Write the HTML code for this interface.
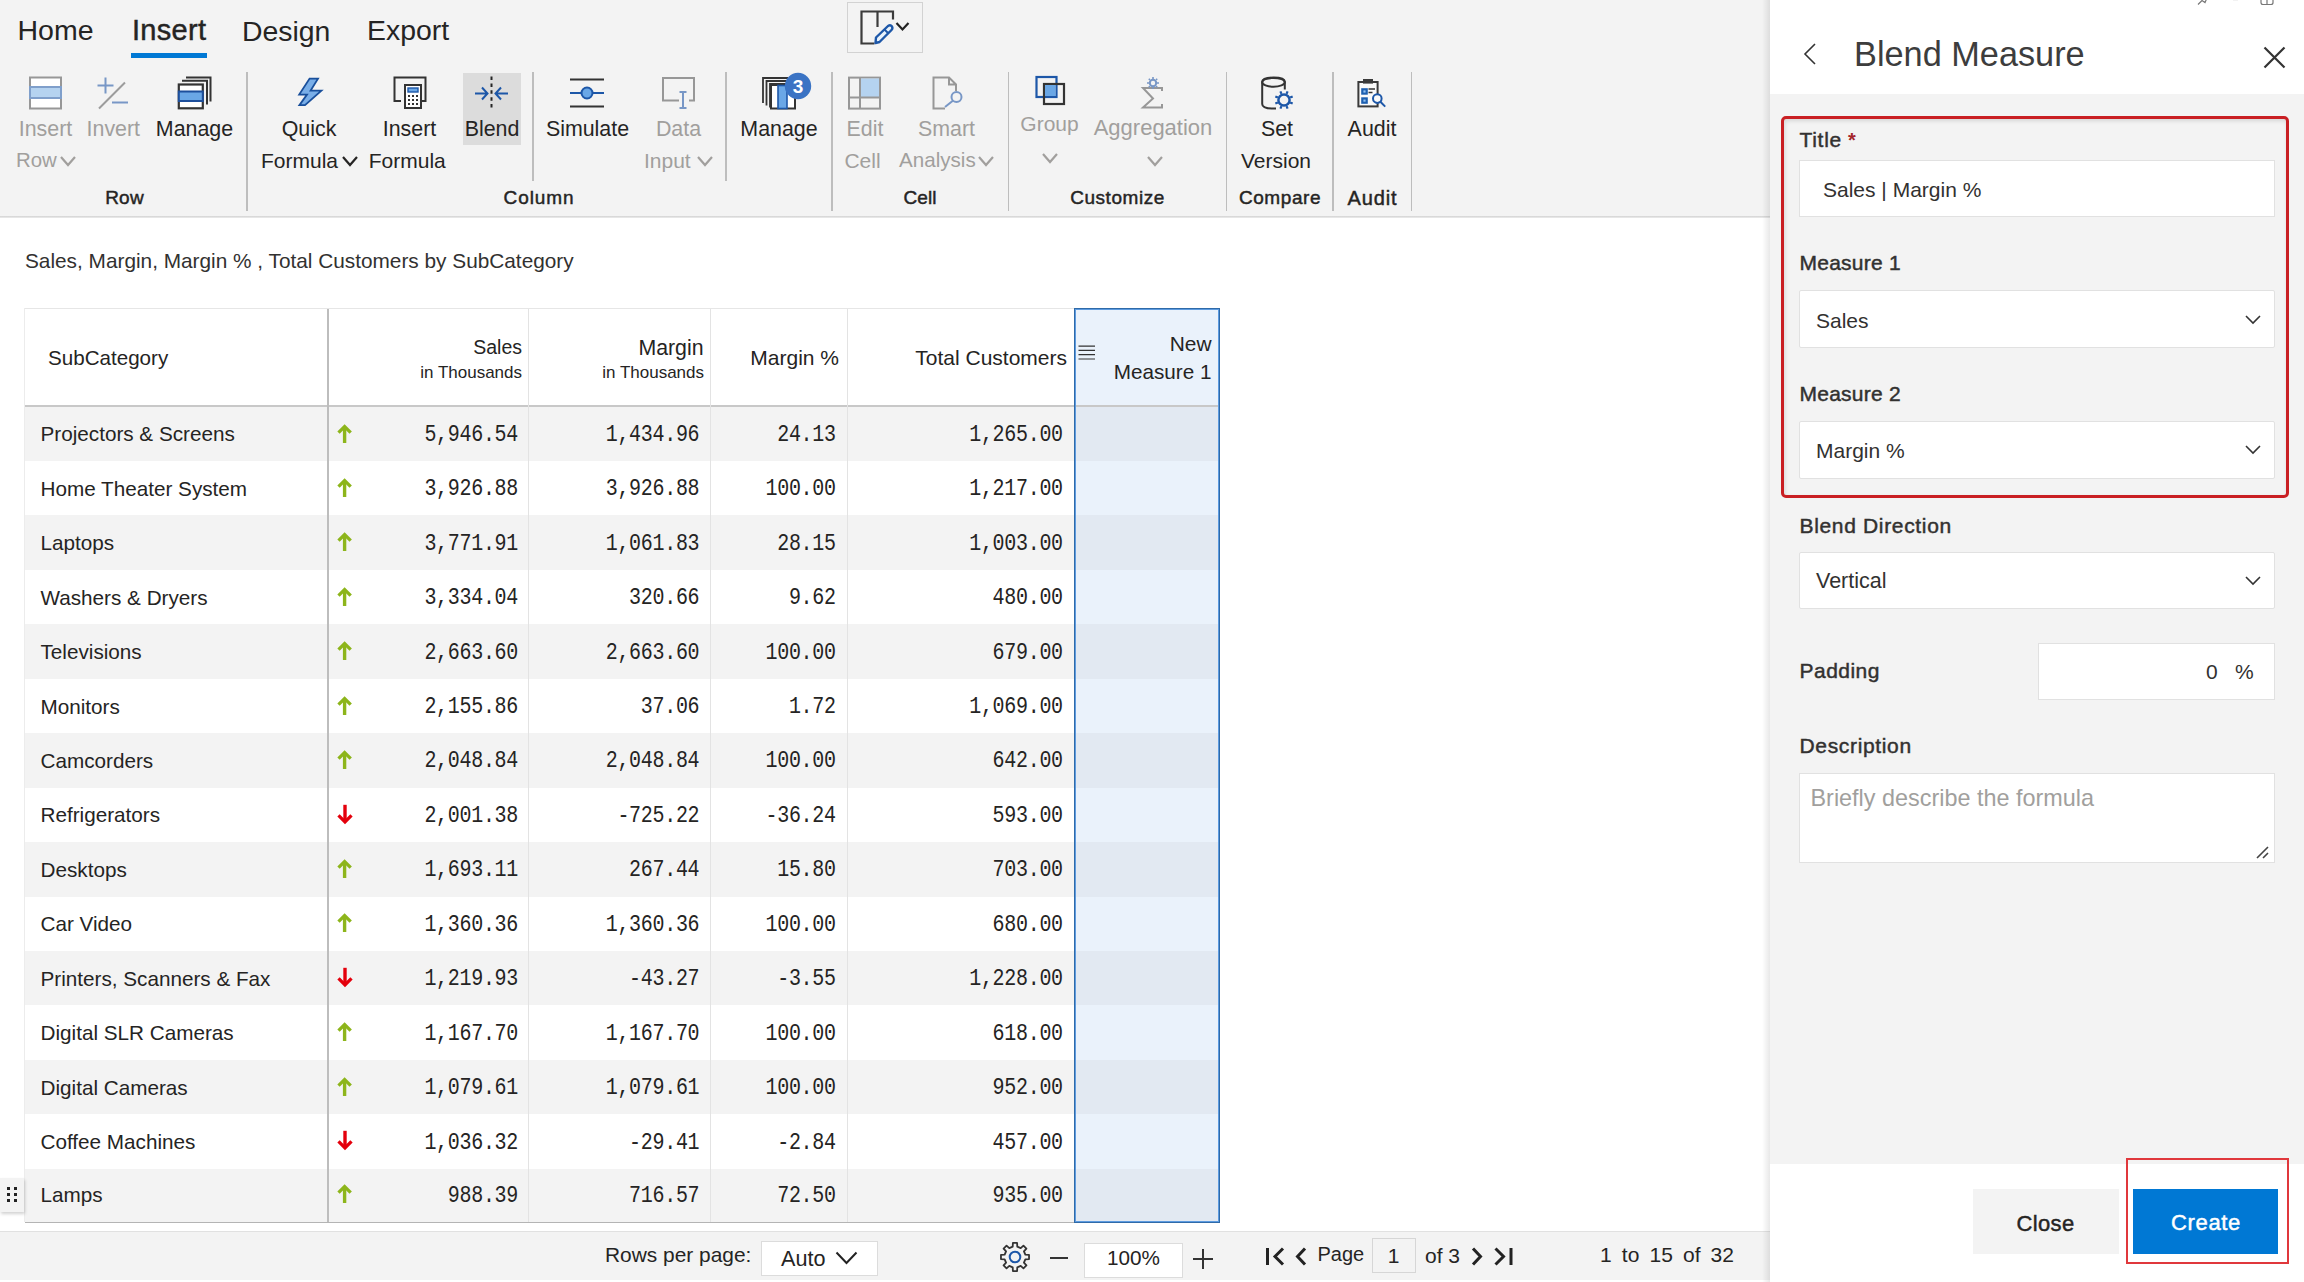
<!DOCTYPE html>
<html><head><meta charset="utf-8"><title>Blend Measure</title>
<style>
html,body{margin:0;padding:0;}
body{width:2304px;height:1282px;position:relative;overflow:hidden;background:#fff;font-family:"Liberation Sans",sans-serif;}
.a{position:absolute;}
.t{position:absolute;white-space:pre;line-height:1;}
</style></head><body>
<div class="a" style="left:0px;top:0px;width:1770px;height:217px;background:#f3f3f3"></div>
<div class="a" style="left:0px;top:216px;width:1770px;height:3px;background:linear-gradient(#d2d2d2,#e6e6e6 50%,#fff)"></div>
<div class="a" style="left:0px;top:218px;width:1770px;height:1013px;background:#fff"></div>
<div class="a" style="left:0px;top:1231px;width:1770px;height:1px;background:#e1e1e1"></div>
<div class="a" style="left:0px;top:1232px;width:1770px;height:48px;background:#f3f3f3"></div>
<div class="a" style="left:0px;top:1280px;width:1770px;height:2px;background:#fff"></div>
<div class="t" style="left:17.5px;top:15.86px;font-family:'Liberation Sans', sans-serif;font-size:28.5px;font-weight:400;color:#252423;">Home</div>
<div class="t" style="left:132px;top:16.14px;font-family:'Liberation Sans', sans-serif;font-size:29px;font-weight:400;color:#252423;-webkit-text-stroke:0.45px #252423;letter-spacing:0.3px">Insert</div>
<div class="a" style="left:131px;top:53px;width:76px;height:5px;background:#0078d4"></div>
<div class="t" style="left:242px;top:16.64px;font-family:'Liberation Sans', sans-serif;font-size:28.4px;font-weight:400;color:#252423;">Design</div>
<div class="t" style="left:367px;top:15.64px;font-family:'Liberation Sans', sans-serif;font-size:28.4px;font-weight:400;color:#252423;">Export</div>
<div class="a" style="left:847px;top:2px;width:76px;height:50.5px;border:1px solid #d2d2d2;box-sizing:border-box;background:#f3f3f3"></div>
<svg class="a" style="left:856px;top:7px;" width="60" height="40" viewBox="0 0 60 40"><path d="M18.5 36.5 H5.5 V4.5 H37 V12.5" fill="none" stroke="#3b3b3b" stroke-width="2.2"/><path d="M21.5 4.5 V20" stroke="#3b3b3b" stroke-width="2.2"/><path d="M19.5 36 L20 30.5 L32 19 Q34.5 17.5 36 19.5 Q37 21.5 35.5 23 L23.5 35 Z" fill="#e8f2fb" stroke="#1d57a8" stroke-width="2.4" stroke-linejoin="round"/><path d="M28.5 22.5 L32 26" stroke="#1d57a8" stroke-width="2"/><path d="M40.5 16 L46.5 22.5 L52.5 16" fill="none" stroke="#222" stroke-width="2.2"/></svg>
<div class="a" style="left:246px;top:72px;width:1.6px;height:139px;background:#bdbdbd"></div>
<div class="a" style="left:532px;top:72px;width:1.6px;height:109px;background:#bdbdbd"></div>
<div class="a" style="left:725px;top:72px;width:1.6px;height:109px;background:#bdbdbd"></div>
<div class="a" style="left:831px;top:72px;width:1.6px;height:139px;background:#bdbdbd"></div>
<div class="a" style="left:1007.5px;top:72px;width:1.6px;height:139px;background:#bdbdbd"></div>
<div class="a" style="left:1225.5px;top:72px;width:1.6px;height:139px;background:#bdbdbd"></div>
<div class="a" style="left:1332px;top:72px;width:1.6px;height:139px;background:#bdbdbd"></div>
<div class="a" style="left:1410.5px;top:72px;width:1.6px;height:139px;background:#bdbdbd"></div>
<svg class="a" style="left:28px;top:76px;" width="36" height="34" viewBox="0 0 36 34"><rect x="2" y="1.5" width="31" height="31" fill="#fff" stroke="#979797" stroke-width="2"/><rect x="2" y="11" width="31" height="11" fill="#b5d3f0" stroke="#7f9fcb" stroke-width="2"/></svg>
<div class="t" style="left:-354.5px;width:800px;text-align:center;top:118.52px;font-family:'Liberation Sans', sans-serif;font-size:21.4px;font-weight:400;color:#a19f9d;">Insert</div>
<div class="t" style="left:16px;top:150.36px;font-family:'Liberation Sans', sans-serif;font-size:20.4px;font-weight:400;color:#a19f9d;">Row</div>
<svg class="a" style="left:58.5px;top:155.0px;" width="18" height="12" viewBox="0 0 18 12"><path d="M2 2 L9.0 10 L16 2" fill="none" stroke="#a19f9d" stroke-width="2.2"/></svg>
<svg class="a" style="left:95px;top:75px;" width="36" height="36" viewBox="0 0 36 36"><path d="M2.5 10.5 H18.5 M10.5 2.5 V18.5" stroke="#7897c6" stroke-width="2"/><path d="M4 33.5 L30 7.5" stroke="#9c9c9c" stroke-width="2"/><path d="M17 27.5 H33" stroke="#7897c6" stroke-width="2"/></svg>
<div class="t" style="left:-286.7px;width:800px;text-align:center;top:118.52px;font-family:'Liberation Sans', sans-serif;font-size:21.4px;font-weight:400;color:#a19f9d;">Invert</div>
<svg class="a" style="left:176px;top:74px;" width="38" height="38" viewBox="0 0 38 38"><path d="M10 3.5 H34.5 V27.5" fill="none" stroke="#333" stroke-width="2"/><path d="M6 6.8 H31 V30.5" fill="none" stroke="#333" stroke-width="2"/><rect x="2.8" y="10.5" width="24" height="23.8" fill="#fff" stroke="#333" stroke-width="2.2"/><rect x="2.8" y="17.5" width="24" height="9.5" fill="#6aa7e6" stroke="#1d4f9c" stroke-width="2"/></svg>
<div class="t" style="left:-205.5px;width:800px;text-align:center;top:118.52px;font-family:'Liberation Sans', sans-serif;font-size:21.4px;font-weight:400;color:#252423;">Manage</div>
<div class="t" style="left:-275.5px;width:800px;text-align:center;top:187.54px;font-family:'Liberation Sans', sans-serif;font-size:19px;font-weight:400;color:#252423;-webkit-text-stroke:0.45px #252423;letter-spacing:0.23px">Row</div>
<svg class="a" style="left:296px;top:75px;" width="30" height="34" viewBox="0 0 30 34"><path d="M13.6 3.6 H22 L14.6 15.6 H25.4 L9 30.2 H3.4 L11 19.6 H3.2 Z" fill="#79aee8" stroke="#194f9b" stroke-width="1.8" stroke-linejoin="miter"/></svg>
<div class="t" style="left:-91px;width:800px;text-align:center;top:118.52px;font-family:'Liberation Sans', sans-serif;font-size:21.4px;font-weight:400;color:#252423;">Quick</div>
<div class="t" style="left:261px;top:149.86px;font-family:'Liberation Sans', sans-serif;font-size:21px;font-weight:400;color:#252423;">Formula</div>
<svg class="a" style="left:341.0px;top:155.0px;" width="18" height="12" viewBox="0 0 18 12"><path d="M2 2 L9.0 10 L16 2" fill="none" stroke="#252423" stroke-width="2.2"/></svg>
<svg class="a" style="left:391px;top:75px;" width="38" height="36" viewBox="0 0 38 36"><path d="M10 26 H3.5 V2.5 H34.5 V26 H31" fill="none" stroke="#333" stroke-width="2"/><rect x="14" y="10" width="16" height="23" fill="#fff" stroke="#333" stroke-width="2"/><rect x="17" y="13" width="10" height="4" fill="#6aa7e6" stroke="#1d57a8" stroke-width="1.4"/><g fill="#333"><rect x="17" y="20" width="2" height="2"/><rect x="21" y="20" width="2" height="2"/><rect x="25" y="20" width="2" height="2"/><rect x="17" y="24" width="2" height="2"/><rect x="21" y="24" width="2" height="2"/><rect x="25" y="24" width="2" height="2"/><rect x="17" y="28" width="2" height="2"/><rect x="21" y="28" width="2" height="2"/><rect x="25" y="28" width="2" height="2"/></g></svg>
<div class="t" style="left:9.5px;width:800px;text-align:center;top:118.52px;font-family:'Liberation Sans', sans-serif;font-size:21.4px;font-weight:400;color:#252423;">Insert</div>
<div class="t" style="left:7.300000000000011px;width:800px;text-align:center;top:149.86px;font-family:'Liberation Sans', sans-serif;font-size:21px;font-weight:400;color:#252423;">Formula</div>
<div class="a" style="left:463px;top:72.5px;width:58px;height:72.5px;background:#dcdcdc"></div>
<svg class="a" style="left:472px;top:74px;" width="40" height="38" viewBox="0 0 40 38"><path d="M19.5 2.5 V35.5" stroke="#262626" stroke-width="2" stroke-dasharray="3.5 3.4"/><path d="M3 19.5 H15 M10 13.5 L15.5 19.5 L10 25.5" fill="none" stroke="#1d57a8" stroke-width="2"/><path d="M36 19.5 H24 M29 13.5 L23.5 19.5 L29 25.5" fill="none" stroke="#1d57a8" stroke-width="2"/></svg>
<div class="t" style="left:92px;width:800px;text-align:center;top:118.52px;font-family:'Liberation Sans', sans-serif;font-size:21.4px;font-weight:400;color:#252423;">Blend</div>
<svg class="a" style="left:568px;top:76px;" width="38" height="34" viewBox="0 0 38 34"><path d="M2 3.5 H36 M2 30.5 H36" stroke="#333" stroke-width="2"/><path d="M2 17 H36" stroke="#1d57a8" stroke-width="2"/><circle cx="19" cy="17" r="5.5" fill="#6aa7e6" stroke="#1d57a8" stroke-width="2"/></svg>
<div class="t" style="left:187.5px;width:800px;text-align:center;top:118.52px;font-family:'Liberation Sans', sans-serif;font-size:21.4px;font-weight:400;color:#252423;">Simulate</div>
<svg class="a" style="left:660px;top:75px;" width="38" height="38" viewBox="0 0 38 38"><path d="M19 25.5 H3 V3 H34 V25.5 H29" fill="none" stroke="#979797" stroke-width="2"/><path d="M19.5 17 H26.5 M23 17 V33 M19.5 33 H26.5" fill="none" stroke="#7897c6" stroke-width="2"/></svg>
<div class="t" style="left:278.5px;width:800px;text-align:center;top:118.52px;font-family:'Liberation Sans', sans-serif;font-size:21.4px;font-weight:400;color:#a19f9d;">Data</div>
<div class="t" style="left:644px;top:149.86px;font-family:'Liberation Sans', sans-serif;font-size:21px;font-weight:400;color:#a19f9d;">Input</div>
<svg class="a" style="left:695.5px;top:155.0px;" width="18" height="12" viewBox="0 0 18 12"><path d="M2 2 L9.0 10 L16 2" fill="none" stroke="#a19f9d" stroke-width="2.2"/></svg>
<div class="t" style="left:139px;width:800px;text-align:center;top:187.54px;font-family:'Liberation Sans', sans-serif;font-size:19px;font-weight:400;color:#252423;-webkit-text-stroke:0.45px #252423;letter-spacing:0.9px">Column</div>
<svg class="a" style="left:760px;top:70px;" width="52" height="42" viewBox="0 0 52 42"><path d="M3 33 V8 H28" fill="none" stroke="#333" stroke-width="1.8"/><path d="M6.5 35.5 V11 H28" fill="none" stroke="#333" stroke-width="1.8"/><path d="M10 37.5 V14 H28" fill="none" stroke="#333" stroke-width="1.8"/><rect x="11" y="15" width="24" height="23.5" fill="#fff" stroke="#333" stroke-width="2"/><rect x="18" y="15.5" width="9" height="23" fill="#6aa7e6" stroke="#1d57a8" stroke-width="1.6"/><circle cx="38" cy="16" r="13.2" fill="#3a73c4"/><text x="38" y="22.5" text-anchor="middle" font-family="Liberation Sans" font-weight="700" font-size="19" fill="#fff">3</text></svg>
<div class="t" style="left:379px;width:800px;text-align:center;top:118.52px;font-family:'Liberation Sans', sans-serif;font-size:21.4px;font-weight:400;color:#252423;">Manage</div>
<svg class="a" style="left:846px;top:75px;" width="36" height="36" viewBox="0 0 36 36"><rect x="3" y="2.6" width="31" height="31" fill="none" stroke="#979797" stroke-width="2"/><rect x="14" y="3.5" width="19" height="18.5" fill="#b5d3f0"/><path d="M14 2.6 V33.6 M3 22.4 H34" stroke="#979797" stroke-width="2"/></svg>
<div class="t" style="left:465px;width:800px;text-align:center;top:118.52px;font-family:'Liberation Sans', sans-serif;font-size:21.4px;font-weight:400;color:#a19f9d;">Edit</div>
<div class="t" style="left:462.5px;width:800px;text-align:center;top:149.86px;font-family:'Liberation Sans', sans-serif;font-size:21px;font-weight:400;color:#a19f9d;">Cell</div>
<svg class="a" style="left:930px;top:75px;" width="36" height="36" viewBox="0 0 36 36"><path d="M15 33.5 H3.5 V2.5 H19 L26 9.5 V16 M19 2.5 V9.5 H26" fill="none" stroke="#979797" stroke-width="2"/><circle cx="26.5" cy="22" r="5" fill="none" stroke="#7897c6" stroke-width="2"/><path d="M22.8 25.8 L15 32" stroke="#7897c6" stroke-width="2"/></svg>
<div class="t" style="left:546.5px;width:800px;text-align:center;top:118.52px;font-family:'Liberation Sans', sans-serif;font-size:21.4px;font-weight:400;color:#a19f9d;">Smart</div>
<div class="t" style="left:899px;top:150.2px;font-family:'Liberation Sans', sans-serif;font-size:20.6px;font-weight:400;color:#a19f9d;">Analysis</div>
<svg class="a" style="left:977.0px;top:155.0px;" width="18" height="12" viewBox="0 0 18 12"><path d="M2 2 L9.0 10 L16 2" fill="none" stroke="#a19f9d" stroke-width="2.2"/></svg>
<div class="t" style="left:520px;width:800px;text-align:center;top:187.54px;font-family:'Liberation Sans', sans-serif;font-size:19px;font-weight:400;color:#252423;-webkit-text-stroke:0.45px #252423;letter-spacing:0.1px">Cell</div>
<svg class="a" style="left:1033px;top:74px;" width="34" height="34" viewBox="0 0 34 34"><rect x="3.5" y="3" width="20" height="20" fill="none" stroke="#1d57a8" stroke-width="2.2"/><rect x="11" y="10" width="20" height="20" fill="none" stroke="#333" stroke-width="2.2"/><rect x="12" y="11" width="10.5" height="11" fill="#6aa7e6"/></svg>
<div class="t" style="left:649.5px;width:800px;text-align:center;top:113.36px;font-family:'Liberation Sans', sans-serif;font-size:21px;font-weight:400;color:#a19f9d;">Group</div>
<svg class="a" style="left:1041.0px;top:152.0px;" width="18" height="12" viewBox="0 0 18 12"><path d="M2 2 L9.0 10 L16 2" fill="none" stroke="#a19f9d" stroke-width="2.2"/></svg>
<svg class="a" style="left:1138px;top:74px;" width="30" height="38" viewBox="0 0 30 38"><path d="M24 17 V14 H5 L15 24.5 L5 33.5 H24 V30" fill="none" stroke="#979797" stroke-width="2"/><circle cx="15" cy="9" r="3.2" fill="none" stroke="#7897c6" stroke-width="2"/><path d="M15 3 V5 M15 13 V15 M9 9 H11 M19 9 H21 M10.8 4.8 L12 6 M18 12 L19.2 13.2 M10.8 13.2 L12 12 M18 6 L19.2 4.8" stroke="#7897c6" stroke-width="1.6"/></svg>
<div class="t" style="left:753px;width:800px;text-align:center;top:117.02px;font-family:'Liberation Sans', sans-serif;font-size:22px;font-weight:400;color:#a19f9d;">Aggregation</div>
<svg class="a" style="left:1146.0px;top:155.0px;" width="18" height="12" viewBox="0 0 18 12"><path d="M2 2 L9.0 10 L16 2" fill="none" stroke="#a19f9d" stroke-width="2.2"/></svg>
<div class="t" style="left:717.5px;width:800px;text-align:center;top:187.54px;font-family:'Liberation Sans', sans-serif;font-size:19px;font-weight:400;color:#252423;-webkit-text-stroke:0.45px #252423;letter-spacing:0.55px">Customize</div>
<svg class="a" style="left:1258px;top:74px;" width="40" height="38" viewBox="0 0 40 38"><path d="M18 34.6 H15 Q4.2 34.6 4.2 30 V8 Q4.2 3.6 15.5 3.6 Q26.8 3.6 26.8 8 V15.5" fill="none" stroke="#333" stroke-width="2"/><ellipse cx="15.5" cy="8.3" rx="11.3" ry="4.4" fill="none" stroke="#333" stroke-width="2"/><circle cx="26" cy="26" r="5.6" fill="none" stroke="#1d57a8" stroke-width="2.5"/><path d="M32.10 28.53 L34.68 29.60 M28.53 32.10 L29.60 34.68 M23.47 32.10 L22.40 34.68 M19.90 28.53 L17.32 29.60 M19.90 23.47 L17.32 22.40 M23.47 19.90 L22.40 17.32 M28.53 19.90 L29.60 17.32 M32.10 23.47 L34.68 22.40" stroke="#1d57a8" stroke-width="2.2"/></svg>
<div class="t" style="left:877px;width:800px;text-align:center;top:118.52px;font-family:'Liberation Sans', sans-serif;font-size:21.4px;font-weight:400;color:#252423;">Set</div>
<div class="t" style="left:876px;width:800px;text-align:center;top:149.86px;font-family:'Liberation Sans', sans-serif;font-size:21px;font-weight:400;color:#252423;">Version</div>
<div class="t" style="left:880px;width:800px;text-align:center;top:187.54px;font-family:'Liberation Sans', sans-serif;font-size:19px;font-weight:400;color:#252423;-webkit-text-stroke:0.45px #252423;letter-spacing:0.57px">Compare</div>
<svg class="a" style="left:1355px;top:74px;" width="36" height="38" viewBox="0 0 36 38"><rect x="3.4" y="8" width="19.2" height="24.4" fill="#fafafa" stroke="#3a3a3a" stroke-width="2"/><rect x="8" y="5" width="10" height="4.6" fill="#3a3a3a"/><rect x="6.2" y="14.2" width="6.6" height="6.5" fill="#1d5fb0"/><rect x="8.4" y="16.4" width="2.2" height="2.2" fill="#8fc0f0"/><rect x="6.2" y="23.3" width="6.6" height="6.5" fill="#1d5fb0"/><rect x="8.4" y="25.5" width="2.2" height="2.2" fill="#8fc0f0"/><path d="M13.5 14.9 H20 M13.5 18.6 H17.5" stroke="#333" stroke-width="1.5"/><circle cx="22.3" cy="24.6" r="4.3" fill="#fafafa" stroke="#1d57a8" stroke-width="2"/><path d="M25.4 27.8 L30.2 32.6" stroke="#1d57a8" stroke-width="2"/></svg>
<div class="t" style="left:972px;width:800px;text-align:center;top:118.52px;font-family:'Liberation Sans', sans-serif;font-size:21.4px;font-weight:400;color:#252423;">Audit</div>
<div class="t" style="left:972.5px;width:800px;text-align:center;top:187.7px;font-family:'Liberation Sans', sans-serif;font-size:20px;font-weight:400;color:#252423;-webkit-text-stroke:0.45px #252423;letter-spacing:0.86px">Audit</div>
<div class="t" style="left:25px;top:250.53px;font-family:'Liberation Sans', sans-serif;font-size:20.8px;font-weight:400;color:#323130;">Sales, Margin, Margin % , Total Customers by SubCategory</div>
<div class="a" style="left:25px;top:308px;width:1050px;height:1px;background:#e6e6e6"></div>
<div class="a" style="left:24px;top:308px;width:1px;height:914px;background:#ececec"></div>
<div class="a" style="left:25px;top:406.6px;width:1050px;height:54.44px;background:#f3f3f3"></div>
<div class="a" style="left:1075px;top:406.6px;width:143px;height:54.44px;background:#e2e9f2"></div>
<div class="a" style="left:1075px;top:461.04px;width:143px;height:54.44px;background:#eaf2fb"></div>
<div class="a" style="left:25px;top:515.48px;width:1050px;height:54.44px;background:#f3f3f3"></div>
<div class="a" style="left:1075px;top:515.48px;width:143px;height:54.44px;background:#e2e9f2"></div>
<div class="a" style="left:1075px;top:569.92px;width:143px;height:54.44px;background:#eaf2fb"></div>
<div class="a" style="left:25px;top:624.36px;width:1050px;height:54.44px;background:#f3f3f3"></div>
<div class="a" style="left:1075px;top:624.36px;width:143px;height:54.44px;background:#e2e9f2"></div>
<div class="a" style="left:1075px;top:678.8px;width:143px;height:54.44px;background:#eaf2fb"></div>
<div class="a" style="left:25px;top:733.24px;width:1050px;height:54.44px;background:#f3f3f3"></div>
<div class="a" style="left:1075px;top:733.24px;width:143px;height:54.44px;background:#e2e9f2"></div>
<div class="a" style="left:1075px;top:787.68px;width:143px;height:54.44px;background:#eaf2fb"></div>
<div class="a" style="left:25px;top:842.12px;width:1050px;height:54.44px;background:#f3f3f3"></div>
<div class="a" style="left:1075px;top:842.12px;width:143px;height:54.44px;background:#e2e9f2"></div>
<div class="a" style="left:1075px;top:896.56px;width:143px;height:54.44px;background:#eaf2fb"></div>
<div class="a" style="left:25px;top:951.0px;width:1050px;height:54.44px;background:#f3f3f3"></div>
<div class="a" style="left:1075px;top:951.0px;width:143px;height:54.44px;background:#e2e9f2"></div>
<div class="a" style="left:1075px;top:1005.44px;width:143px;height:54.44px;background:#eaf2fb"></div>
<div class="a" style="left:25px;top:1059.88px;width:1050px;height:54.44px;background:#f3f3f3"></div>
<div class="a" style="left:1075px;top:1059.88px;width:143px;height:54.44px;background:#e2e9f2"></div>
<div class="a" style="left:1075px;top:1114.32px;width:143px;height:54.44px;background:#eaf2fb"></div>
<div class="a" style="left:25px;top:1168.76px;width:1050px;height:54.44px;background:#f3f3f3"></div>
<div class="a" style="left:1075px;top:1168.76px;width:143px;height:54.44px;background:#e2e9f2"></div>
<div class="a" style="left:1075px;top:309px;width:143px;height:97px;background:#eaf2fb"></div>
<div class="a" style="left:25px;top:405px;width:1194px;height:2px;background:#c8c8c8"></div>
<div class="a" style="left:25px;top:1221.5px;width:1194px;height:1.6px;background:#b4b4b4"></div>
<div class="a" style="left:327px;top:309px;width:2px;height:913px;background:#bdbdbd"></div>
<div class="a" style="left:528.3px;top:309px;width:1.2px;height:913px;background:#e3e3e3"></div>
<div class="a" style="left:709.8px;top:309px;width:1.2px;height:913px;background:#e3e3e3"></div>
<div class="a" style="left:846.5px;top:309px;width:1.2px;height:913px;background:#e3e3e3"></div>
<div class="a" style="left:1074px;top:308px;width:145.5px;height:915px;border:1px solid #2f6aa8;box-shadow:inset 0 0 0 1px #5d9be0;box-sizing:border-box"></div>
<div class="t" style="left:48px;top:347.7px;font-family:'Liberation Sans', sans-serif;font-size:20.6px;font-weight:400;color:#252423;">SubCategory</div>
<div class="t" style="right:1782px;top:337.62px;font-family:'Liberation Sans', sans-serif;font-size:19.5px;font-weight:400;color:#252423;">Sales</div>
<div class="t" style="right:1782px;top:363.72px;font-family:'Liberation Sans', sans-serif;font-size:17px;font-weight:400;color:#252423;">in Thousands</div>
<div class="t" style="right:1600.5px;top:337.61px;font-family:'Liberation Sans', sans-serif;font-size:21.3px;font-weight:400;color:#252423;">Margin</div>
<div class="t" style="right:1600px;top:363.72px;font-family:'Liberation Sans', sans-serif;font-size:17px;font-weight:400;color:#252423;">in Thousands</div>
<div class="t" style="right:1465px;top:347.36px;font-family:'Liberation Sans', sans-serif;font-size:21px;font-weight:400;color:#252423;">Margin %</div>
<div class="t" style="right:1237px;top:347.36px;font-family:'Liberation Sans', sans-serif;font-size:21px;font-weight:400;color:#252423;">Total Customers</div>
<div class="t" style="right:1092.5px;top:333.94px;font-family:'Liberation Sans', sans-serif;font-size:20.9px;font-weight:400;color:#252423;">New</div>
<div class="t" style="right:1092.5px;top:362.11px;font-family:'Liberation Sans', sans-serif;font-size:20.7px;font-weight:400;color:#252423;">Measure 1</div>
<svg class="a" style="left:1077px;top:344px;" width="20" height="18" viewBox="0 0 20 18"><path d="M1.5 2.2 H18 M1.5 6.4 H18 M1.5 10.6 H18 M1.5 15 H18" stroke="#333" stroke-width="1.2"/></svg>
<div class="t" style="left:40.5px;top:424.41px;font-family:'Liberation Sans', sans-serif;font-size:20.7px;font-weight:400;color:#252423;">Projectors &amp; Screens</div>
<svg class="a" style="left:336.5px;top:422.5px;" width="16" height="21" viewBox="0 0 16 21"><path d="M1.5 9.6 L7.6 3.5 L13.7 9.6" stroke="#8db51b" stroke-width="3.3" fill="none" stroke-linejoin="miter"/><path d="M7.6 4 V20" stroke="#8db51b" stroke-width="3.4"/></svg>
<div class="t" style="right:1786px;top:425.8px;font-family:'Liberation Mono', monospace;font-size:20px;font-weight:400;color:#252423;letter-spacing:-0.3px;transform:scaleY(1.17);transform-origin:0 15.2px">5,946.54</div>
<div class="t" style="right:1604.7px;top:425.8px;font-family:'Liberation Mono', monospace;font-size:20px;font-weight:400;color:#252423;letter-spacing:-0.3px;transform:scaleY(1.17);transform-origin:0 15.2px">1,434.96</div>
<div class="t" style="right:1468.3px;top:425.8px;font-family:'Liberation Mono', monospace;font-size:20px;font-weight:400;color:#252423;letter-spacing:-0.3px;transform:scaleY(1.17);transform-origin:0 15.2px">24.13</div>
<div class="t" style="right:1241.2px;top:425.8px;font-family:'Liberation Mono', monospace;font-size:20px;font-weight:400;color:#252423;letter-spacing:-0.3px;transform:scaleY(1.17);transform-origin:0 15.2px">1,265.00</div>
<div class="t" style="left:40.5px;top:478.85px;font-family:'Liberation Sans', sans-serif;font-size:20.7px;font-weight:400;color:#252423;">Home Theater System</div>
<svg class="a" style="left:336.5px;top:476.94px;" width="16" height="21" viewBox="0 0 16 21"><path d="M1.5 9.6 L7.6 3.5 L13.7 9.6" stroke="#8db51b" stroke-width="3.3" fill="none" stroke-linejoin="miter"/><path d="M7.6 4 V20" stroke="#8db51b" stroke-width="3.4"/></svg>
<div class="t" style="right:1786px;top:480.24px;font-family:'Liberation Mono', monospace;font-size:20px;font-weight:400;color:#252423;letter-spacing:-0.3px;transform:scaleY(1.17);transform-origin:0 15.2px">3,926.88</div>
<div class="t" style="right:1604.7px;top:480.24px;font-family:'Liberation Mono', monospace;font-size:20px;font-weight:400;color:#252423;letter-spacing:-0.3px;transform:scaleY(1.17);transform-origin:0 15.2px">3,926.88</div>
<div class="t" style="right:1468.3px;top:480.24px;font-family:'Liberation Mono', monospace;font-size:20px;font-weight:400;color:#252423;letter-spacing:-0.3px;transform:scaleY(1.17);transform-origin:0 15.2px">100.00</div>
<div class="t" style="right:1241.2px;top:480.24px;font-family:'Liberation Mono', monospace;font-size:20px;font-weight:400;color:#252423;letter-spacing:-0.3px;transform:scaleY(1.17);transform-origin:0 15.2px">1,217.00</div>
<div class="t" style="left:40.5px;top:533.29px;font-family:'Liberation Sans', sans-serif;font-size:20.7px;font-weight:400;color:#252423;">Laptops</div>
<svg class="a" style="left:336.5px;top:531.38px;" width="16" height="21" viewBox="0 0 16 21"><path d="M1.5 9.6 L7.6 3.5 L13.7 9.6" stroke="#8db51b" stroke-width="3.3" fill="none" stroke-linejoin="miter"/><path d="M7.6 4 V20" stroke="#8db51b" stroke-width="3.4"/></svg>
<div class="t" style="right:1786px;top:534.68px;font-family:'Liberation Mono', monospace;font-size:20px;font-weight:400;color:#252423;letter-spacing:-0.3px;transform:scaleY(1.17);transform-origin:0 15.2px">3,771.91</div>
<div class="t" style="right:1604.7px;top:534.68px;font-family:'Liberation Mono', monospace;font-size:20px;font-weight:400;color:#252423;letter-spacing:-0.3px;transform:scaleY(1.17);transform-origin:0 15.2px">1,061.83</div>
<div class="t" style="right:1468.3px;top:534.68px;font-family:'Liberation Mono', monospace;font-size:20px;font-weight:400;color:#252423;letter-spacing:-0.3px;transform:scaleY(1.17);transform-origin:0 15.2px">28.15</div>
<div class="t" style="right:1241.2px;top:534.68px;font-family:'Liberation Mono', monospace;font-size:20px;font-weight:400;color:#252423;letter-spacing:-0.3px;transform:scaleY(1.17);transform-origin:0 15.2px">1,003.00</div>
<div class="t" style="left:40.5px;top:587.73px;font-family:'Liberation Sans', sans-serif;font-size:20.7px;font-weight:400;color:#252423;">Washers &amp; Dryers</div>
<svg class="a" style="left:336.5px;top:585.82px;" width="16" height="21" viewBox="0 0 16 21"><path d="M1.5 9.6 L7.6 3.5 L13.7 9.6" stroke="#8db51b" stroke-width="3.3" fill="none" stroke-linejoin="miter"/><path d="M7.6 4 V20" stroke="#8db51b" stroke-width="3.4"/></svg>
<div class="t" style="right:1786px;top:589.12px;font-family:'Liberation Mono', monospace;font-size:20px;font-weight:400;color:#252423;letter-spacing:-0.3px;transform:scaleY(1.17);transform-origin:0 15.2px">3,334.04</div>
<div class="t" style="right:1604.7px;top:589.12px;font-family:'Liberation Mono', monospace;font-size:20px;font-weight:400;color:#252423;letter-spacing:-0.3px;transform:scaleY(1.17);transform-origin:0 15.2px">320.66</div>
<div class="t" style="right:1468.3px;top:589.12px;font-family:'Liberation Mono', monospace;font-size:20px;font-weight:400;color:#252423;letter-spacing:-0.3px;transform:scaleY(1.17);transform-origin:0 15.2px">9.62</div>
<div class="t" style="right:1241.2px;top:589.12px;font-family:'Liberation Mono', monospace;font-size:20px;font-weight:400;color:#252423;letter-spacing:-0.3px;transform:scaleY(1.17);transform-origin:0 15.2px">480.00</div>
<div class="t" style="left:40.5px;top:642.17px;font-family:'Liberation Sans', sans-serif;font-size:20.7px;font-weight:400;color:#252423;">Televisions</div>
<svg class="a" style="left:336.5px;top:640.26px;" width="16" height="21" viewBox="0 0 16 21"><path d="M1.5 9.6 L7.6 3.5 L13.7 9.6" stroke="#8db51b" stroke-width="3.3" fill="none" stroke-linejoin="miter"/><path d="M7.6 4 V20" stroke="#8db51b" stroke-width="3.4"/></svg>
<div class="t" style="right:1786px;top:643.56px;font-family:'Liberation Mono', monospace;font-size:20px;font-weight:400;color:#252423;letter-spacing:-0.3px;transform:scaleY(1.17);transform-origin:0 15.2px">2,663.60</div>
<div class="t" style="right:1604.7px;top:643.56px;font-family:'Liberation Mono', monospace;font-size:20px;font-weight:400;color:#252423;letter-spacing:-0.3px;transform:scaleY(1.17);transform-origin:0 15.2px">2,663.60</div>
<div class="t" style="right:1468.3px;top:643.56px;font-family:'Liberation Mono', monospace;font-size:20px;font-weight:400;color:#252423;letter-spacing:-0.3px;transform:scaleY(1.17);transform-origin:0 15.2px">100.00</div>
<div class="t" style="right:1241.2px;top:643.56px;font-family:'Liberation Mono', monospace;font-size:20px;font-weight:400;color:#252423;letter-spacing:-0.3px;transform:scaleY(1.17);transform-origin:0 15.2px">679.00</div>
<div class="t" style="left:40.5px;top:696.61px;font-family:'Liberation Sans', sans-serif;font-size:20.7px;font-weight:400;color:#252423;">Monitors</div>
<svg class="a" style="left:336.5px;top:694.7px;" width="16" height="21" viewBox="0 0 16 21"><path d="M1.5 9.6 L7.6 3.5 L13.7 9.6" stroke="#8db51b" stroke-width="3.3" fill="none" stroke-linejoin="miter"/><path d="M7.6 4 V20" stroke="#8db51b" stroke-width="3.4"/></svg>
<div class="t" style="right:1786px;top:698.0px;font-family:'Liberation Mono', monospace;font-size:20px;font-weight:400;color:#252423;letter-spacing:-0.3px;transform:scaleY(1.17);transform-origin:0 15.2px">2,155.86</div>
<div class="t" style="right:1604.7px;top:698.0px;font-family:'Liberation Mono', monospace;font-size:20px;font-weight:400;color:#252423;letter-spacing:-0.3px;transform:scaleY(1.17);transform-origin:0 15.2px">37.06</div>
<div class="t" style="right:1468.3px;top:698.0px;font-family:'Liberation Mono', monospace;font-size:20px;font-weight:400;color:#252423;letter-spacing:-0.3px;transform:scaleY(1.17);transform-origin:0 15.2px">1.72</div>
<div class="t" style="right:1241.2px;top:698.0px;font-family:'Liberation Mono', monospace;font-size:20px;font-weight:400;color:#252423;letter-spacing:-0.3px;transform:scaleY(1.17);transform-origin:0 15.2px">1,069.00</div>
<div class="t" style="left:40.5px;top:751.05px;font-family:'Liberation Sans', sans-serif;font-size:20.7px;font-weight:400;color:#252423;">Camcorders</div>
<svg class="a" style="left:336.5px;top:749.14px;" width="16" height="21" viewBox="0 0 16 21"><path d="M1.5 9.6 L7.6 3.5 L13.7 9.6" stroke="#8db51b" stroke-width="3.3" fill="none" stroke-linejoin="miter"/><path d="M7.6 4 V20" stroke="#8db51b" stroke-width="3.4"/></svg>
<div class="t" style="right:1786px;top:752.44px;font-family:'Liberation Mono', monospace;font-size:20px;font-weight:400;color:#252423;letter-spacing:-0.3px;transform:scaleY(1.17);transform-origin:0 15.2px">2,048.84</div>
<div class="t" style="right:1604.7px;top:752.44px;font-family:'Liberation Mono', monospace;font-size:20px;font-weight:400;color:#252423;letter-spacing:-0.3px;transform:scaleY(1.17);transform-origin:0 15.2px">2,048.84</div>
<div class="t" style="right:1468.3px;top:752.44px;font-family:'Liberation Mono', monospace;font-size:20px;font-weight:400;color:#252423;letter-spacing:-0.3px;transform:scaleY(1.17);transform-origin:0 15.2px">100.00</div>
<div class="t" style="right:1241.2px;top:752.44px;font-family:'Liberation Mono', monospace;font-size:20px;font-weight:400;color:#252423;letter-spacing:-0.3px;transform:scaleY(1.17);transform-origin:0 15.2px">642.00</div>
<div class="t" style="left:40.5px;top:805.49px;font-family:'Liberation Sans', sans-serif;font-size:20.7px;font-weight:400;color:#252423;">Refrigerators</div>
<svg class="a" style="left:336.5px;top:803.58px;" width="16" height="21" viewBox="0 0 16 21"><path d="M1.5 11.3 L8 17.8 L14.5 11.3" stroke="#e4000c" stroke-width="3.3" fill="none" stroke-linejoin="miter"/><path d="M8 0.8 V17" stroke="#e4000c" stroke-width="3.4"/></svg>
<div class="t" style="right:1786px;top:806.88px;font-family:'Liberation Mono', monospace;font-size:20px;font-weight:400;color:#252423;letter-spacing:-0.3px;transform:scaleY(1.17);transform-origin:0 15.2px">2,001.38</div>
<div class="t" style="right:1604.7px;top:806.88px;font-family:'Liberation Mono', monospace;font-size:20px;font-weight:400;color:#252423;letter-spacing:-0.3px;transform:scaleY(1.17);transform-origin:0 15.2px">-725.22</div>
<div class="t" style="right:1468.3px;top:806.88px;font-family:'Liberation Mono', monospace;font-size:20px;font-weight:400;color:#252423;letter-spacing:-0.3px;transform:scaleY(1.17);transform-origin:0 15.2px">-36.24</div>
<div class="t" style="right:1241.2px;top:806.88px;font-family:'Liberation Mono', monospace;font-size:20px;font-weight:400;color:#252423;letter-spacing:-0.3px;transform:scaleY(1.17);transform-origin:0 15.2px">593.00</div>
<div class="t" style="left:40.5px;top:859.93px;font-family:'Liberation Sans', sans-serif;font-size:20.7px;font-weight:400;color:#252423;">Desktops</div>
<svg class="a" style="left:336.5px;top:858.02px;" width="16" height="21" viewBox="0 0 16 21"><path d="M1.5 9.6 L7.6 3.5 L13.7 9.6" stroke="#8db51b" stroke-width="3.3" fill="none" stroke-linejoin="miter"/><path d="M7.6 4 V20" stroke="#8db51b" stroke-width="3.4"/></svg>
<div class="t" style="right:1786px;top:861.32px;font-family:'Liberation Mono', monospace;font-size:20px;font-weight:400;color:#252423;letter-spacing:-0.3px;transform:scaleY(1.17);transform-origin:0 15.2px">1,693.11</div>
<div class="t" style="right:1604.7px;top:861.32px;font-family:'Liberation Mono', monospace;font-size:20px;font-weight:400;color:#252423;letter-spacing:-0.3px;transform:scaleY(1.17);transform-origin:0 15.2px">267.44</div>
<div class="t" style="right:1468.3px;top:861.32px;font-family:'Liberation Mono', monospace;font-size:20px;font-weight:400;color:#252423;letter-spacing:-0.3px;transform:scaleY(1.17);transform-origin:0 15.2px">15.80</div>
<div class="t" style="right:1241.2px;top:861.32px;font-family:'Liberation Mono', monospace;font-size:20px;font-weight:400;color:#252423;letter-spacing:-0.3px;transform:scaleY(1.17);transform-origin:0 15.2px">703.00</div>
<div class="t" style="left:40.5px;top:914.37px;font-family:'Liberation Sans', sans-serif;font-size:20.7px;font-weight:400;color:#252423;">Car Video</div>
<svg class="a" style="left:336.5px;top:912.46px;" width="16" height="21" viewBox="0 0 16 21"><path d="M1.5 9.6 L7.6 3.5 L13.7 9.6" stroke="#8db51b" stroke-width="3.3" fill="none" stroke-linejoin="miter"/><path d="M7.6 4 V20" stroke="#8db51b" stroke-width="3.4"/></svg>
<div class="t" style="right:1786px;top:915.76px;font-family:'Liberation Mono', monospace;font-size:20px;font-weight:400;color:#252423;letter-spacing:-0.3px;transform:scaleY(1.17);transform-origin:0 15.2px">1,360.36</div>
<div class="t" style="right:1604.7px;top:915.76px;font-family:'Liberation Mono', monospace;font-size:20px;font-weight:400;color:#252423;letter-spacing:-0.3px;transform:scaleY(1.17);transform-origin:0 15.2px">1,360.36</div>
<div class="t" style="right:1468.3px;top:915.76px;font-family:'Liberation Mono', monospace;font-size:20px;font-weight:400;color:#252423;letter-spacing:-0.3px;transform:scaleY(1.17);transform-origin:0 15.2px">100.00</div>
<div class="t" style="right:1241.2px;top:915.76px;font-family:'Liberation Mono', monospace;font-size:20px;font-weight:400;color:#252423;letter-spacing:-0.3px;transform:scaleY(1.17);transform-origin:0 15.2px">680.00</div>
<div class="t" style="left:40.5px;top:968.81px;font-family:'Liberation Sans', sans-serif;font-size:20.7px;font-weight:400;color:#252423;">Printers, Scanners &amp; Fax</div>
<svg class="a" style="left:336.5px;top:966.9px;" width="16" height="21" viewBox="0 0 16 21"><path d="M1.5 11.3 L8 17.8 L14.5 11.3" stroke="#e4000c" stroke-width="3.3" fill="none" stroke-linejoin="miter"/><path d="M8 0.8 V17" stroke="#e4000c" stroke-width="3.4"/></svg>
<div class="t" style="right:1786px;top:970.2px;font-family:'Liberation Mono', monospace;font-size:20px;font-weight:400;color:#252423;letter-spacing:-0.3px;transform:scaleY(1.17);transform-origin:0 15.2px">1,219.93</div>
<div class="t" style="right:1604.7px;top:970.2px;font-family:'Liberation Mono', monospace;font-size:20px;font-weight:400;color:#252423;letter-spacing:-0.3px;transform:scaleY(1.17);transform-origin:0 15.2px">-43.27</div>
<div class="t" style="right:1468.3px;top:970.2px;font-family:'Liberation Mono', monospace;font-size:20px;font-weight:400;color:#252423;letter-spacing:-0.3px;transform:scaleY(1.17);transform-origin:0 15.2px">-3.55</div>
<div class="t" style="right:1241.2px;top:970.2px;font-family:'Liberation Mono', monospace;font-size:20px;font-weight:400;color:#252423;letter-spacing:-0.3px;transform:scaleY(1.17);transform-origin:0 15.2px">1,228.00</div>
<div class="t" style="left:40.5px;top:1023.25px;font-family:'Liberation Sans', sans-serif;font-size:20.7px;font-weight:400;color:#252423;">Digital SLR Cameras</div>
<svg class="a" style="left:336.5px;top:1021.34px;" width="16" height="21" viewBox="0 0 16 21"><path d="M1.5 9.6 L7.6 3.5 L13.7 9.6" stroke="#8db51b" stroke-width="3.3" fill="none" stroke-linejoin="miter"/><path d="M7.6 4 V20" stroke="#8db51b" stroke-width="3.4"/></svg>
<div class="t" style="right:1786px;top:1024.64px;font-family:'Liberation Mono', monospace;font-size:20px;font-weight:400;color:#252423;letter-spacing:-0.3px;transform:scaleY(1.17);transform-origin:0 15.2px">1,167.70</div>
<div class="t" style="right:1604.7px;top:1024.64px;font-family:'Liberation Mono', monospace;font-size:20px;font-weight:400;color:#252423;letter-spacing:-0.3px;transform:scaleY(1.17);transform-origin:0 15.2px">1,167.70</div>
<div class="t" style="right:1468.3px;top:1024.64px;font-family:'Liberation Mono', monospace;font-size:20px;font-weight:400;color:#252423;letter-spacing:-0.3px;transform:scaleY(1.17);transform-origin:0 15.2px">100.00</div>
<div class="t" style="right:1241.2px;top:1024.64px;font-family:'Liberation Mono', monospace;font-size:20px;font-weight:400;color:#252423;letter-spacing:-0.3px;transform:scaleY(1.17);transform-origin:0 15.2px">618.00</div>
<div class="t" style="left:40.5px;top:1077.69px;font-family:'Liberation Sans', sans-serif;font-size:20.7px;font-weight:400;color:#252423;">Digital Cameras</div>
<svg class="a" style="left:336.5px;top:1075.78px;" width="16" height="21" viewBox="0 0 16 21"><path d="M1.5 9.6 L7.6 3.5 L13.7 9.6" stroke="#8db51b" stroke-width="3.3" fill="none" stroke-linejoin="miter"/><path d="M7.6 4 V20" stroke="#8db51b" stroke-width="3.4"/></svg>
<div class="t" style="right:1786px;top:1079.08px;font-family:'Liberation Mono', monospace;font-size:20px;font-weight:400;color:#252423;letter-spacing:-0.3px;transform:scaleY(1.17);transform-origin:0 15.2px">1,079.61</div>
<div class="t" style="right:1604.7px;top:1079.08px;font-family:'Liberation Mono', monospace;font-size:20px;font-weight:400;color:#252423;letter-spacing:-0.3px;transform:scaleY(1.17);transform-origin:0 15.2px">1,079.61</div>
<div class="t" style="right:1468.3px;top:1079.08px;font-family:'Liberation Mono', monospace;font-size:20px;font-weight:400;color:#252423;letter-spacing:-0.3px;transform:scaleY(1.17);transform-origin:0 15.2px">100.00</div>
<div class="t" style="right:1241.2px;top:1079.08px;font-family:'Liberation Mono', monospace;font-size:20px;font-weight:400;color:#252423;letter-spacing:-0.3px;transform:scaleY(1.17);transform-origin:0 15.2px">952.00</div>
<div class="t" style="left:40.5px;top:1132.13px;font-family:'Liberation Sans', sans-serif;font-size:20.7px;font-weight:400;color:#252423;">Coffee Machines</div>
<svg class="a" style="left:336.5px;top:1130.22px;" width="16" height="21" viewBox="0 0 16 21"><path d="M1.5 11.3 L8 17.8 L14.5 11.3" stroke="#e4000c" stroke-width="3.3" fill="none" stroke-linejoin="miter"/><path d="M8 0.8 V17" stroke="#e4000c" stroke-width="3.4"/></svg>
<div class="t" style="right:1786px;top:1133.52px;font-family:'Liberation Mono', monospace;font-size:20px;font-weight:400;color:#252423;letter-spacing:-0.3px;transform:scaleY(1.17);transform-origin:0 15.2px">1,036.32</div>
<div class="t" style="right:1604.7px;top:1133.52px;font-family:'Liberation Mono', monospace;font-size:20px;font-weight:400;color:#252423;letter-spacing:-0.3px;transform:scaleY(1.17);transform-origin:0 15.2px">-29.41</div>
<div class="t" style="right:1468.3px;top:1133.52px;font-family:'Liberation Mono', monospace;font-size:20px;font-weight:400;color:#252423;letter-spacing:-0.3px;transform:scaleY(1.17);transform-origin:0 15.2px">-2.84</div>
<div class="t" style="right:1241.2px;top:1133.52px;font-family:'Liberation Mono', monospace;font-size:20px;font-weight:400;color:#252423;letter-spacing:-0.3px;transform:scaleY(1.17);transform-origin:0 15.2px">457.00</div>
<div class="t" style="left:40.5px;top:1185.27px;font-family:'Liberation Sans', sans-serif;font-size:20.7px;font-weight:400;color:#252423;">Lamps</div>
<svg class="a" style="left:336.5px;top:1183.36px;" width="16" height="21" viewBox="0 0 16 21"><path d="M1.5 9.6 L7.6 3.5 L13.7 9.6" stroke="#8db51b" stroke-width="3.3" fill="none" stroke-linejoin="miter"/><path d="M7.6 4 V20" stroke="#8db51b" stroke-width="3.4"/></svg>
<div class="t" style="right:1786px;top:1186.66px;font-family:'Liberation Mono', monospace;font-size:20px;font-weight:400;color:#252423;letter-spacing:-0.3px;transform:scaleY(1.17);transform-origin:0 15.2px">988.39</div>
<div class="t" style="right:1604.7px;top:1186.66px;font-family:'Liberation Mono', monospace;font-size:20px;font-weight:400;color:#252423;letter-spacing:-0.3px;transform:scaleY(1.17);transform-origin:0 15.2px">716.57</div>
<div class="t" style="right:1468.3px;top:1186.66px;font-family:'Liberation Mono', monospace;font-size:20px;font-weight:400;color:#252423;letter-spacing:-0.3px;transform:scaleY(1.17);transform-origin:0 15.2px">72.50</div>
<div class="t" style="right:1241.2px;top:1186.66px;font-family:'Liberation Mono', monospace;font-size:20px;font-weight:400;color:#252423;letter-spacing:-0.3px;transform:scaleY(1.17);transform-origin:0 15.2px">935.00</div>
<div class="a" style="left:0px;top:1178px;width:24px;height:34px;background:#f3f3f3;box-shadow:1px 2px 3px rgba(0,0,0,0.18)"></div>
<svg class="a" style="left:6px;top:1186px;" width="12" height="18" viewBox="0 0 12 18"><g fill="#222"><rect x="1" y="1" width="3" height="3"/><rect x="8" y="1" width="3" height="3"/><rect x="1" y="7" width="3" height="3"/><rect x="8" y="7" width="3" height="3"/><rect x="1" y="13" width="3" height="3"/><rect x="8" y="13" width="3" height="3"/></g></svg>
<div class="t" style="left:605px;top:1245.04px;font-family:'Liberation Sans', sans-serif;font-size:20.9px;font-weight:400;color:#252423;">Rows per page:</div>
<div class="a" style="left:761px;top:1240.5px;width:116.5px;height:35px;background:#fff;border:1px solid #dcdcdc;box-sizing:border-box"></div>
<div class="t" style="left:781px;top:1247.86px;font-family:'Liberation Sans', sans-serif;font-size:21.6px;font-weight:400;color:#252423;">Auto</div>
<svg class="a" style="left:834px;top:1250px;" width="26" height="16" viewBox="0 0 26 16"><path d="M2.5 2.5 L12.5 13 L22.5 2.5" fill="none" stroke="#222" stroke-width="2"/></svg>
<svg class="a" style="left:999px;top:1240.5px;" width="32" height="32" viewBox="0 0 32 32"><path d="M13.71 5.65 L13.90 1.96 L18.10 1.96 L18.29 5.65 L21.70 7.06 L24.45 4.59 L27.41 7.55 L24.94 10.30 L26.35 13.71 L30.04 13.90 L30.04 18.10 L26.35 18.29 L24.94 21.70 L27.41 24.45 L24.45 27.41 L21.70 24.94 L18.29 26.35 L18.10 30.04 L13.90 30.04 L13.71 26.35 L10.30 24.94 L7.55 27.41 L4.59 24.45 L7.06 21.70 L5.65 18.29 L1.96 18.10 L1.96 13.90 L5.65 13.71 L7.06 10.30 L4.59 7.55 L7.55 4.59 L10.30 7.06 Z" fill="none" stroke="#333" stroke-width="1.8" stroke-linejoin="round"/><circle cx="16" cy="16" r="5.3" fill="none" stroke="#1d57a8" stroke-width="2"/></svg>
<div class="a" style="left:1050px;top:1257px;width:18px;height:2px;background:#333"></div>
<div class="a" style="left:1084px;top:1242.5px;width:98.5px;height:35px;background:#fff;border:1px solid #dcdcdc;box-sizing:border-box"></div>
<div class="t" style="left:1107px;top:1248.41px;font-family:'Liberation Sans', sans-serif;font-size:20.7px;font-weight:400;color:#252423;">100%</div>
<div class="a" style="left:1193px;top:1257.5px;width:19.5px;height:2px;background:#333"></div>
<div class="a" style="left:1202px;top:1249px;width:2px;height:19.5px;background:#333"></div>
<svg class="a" style="left:1262px;top:1244px;" width="26" height="26" viewBox="0 0 26 26"><path d="M5.5 4 V21" stroke="#222" stroke-width="3"/><path d="M21 4.5 L13 12.5 L21 20.5" fill="none" stroke="#222" stroke-width="3"/></svg>
<svg class="a" style="left:1293px;top:1244px;" width="16" height="26" viewBox="0 0 16 26"><path d="M12 4.5 L4.5 12.5 L12 20.5" fill="none" stroke="#222" stroke-width="3"/></svg>
<div class="t" style="left:1317.5px;top:1244.4px;font-family:'Liberation Sans', sans-serif;font-size:20px;font-weight:400;color:#252423;">Page</div>
<div class="a" style="left:1372px;top:1238px;width:44px;height:35px;border:1px solid #d6d6d6;box-sizing:border-box"></div>
<div class="t" style="left:993.5px;width:800px;text-align:center;top:1244.96px;font-family:'Liberation Sans', sans-serif;font-size:21px;font-weight:400;color:#252423;">1</div>
<div class="t" style="left:1425px;top:1244.96px;font-family:'Liberation Sans', sans-serif;font-size:21px;font-weight:400;color:#252423;">of 3</div>
<svg class="a" style="left:1469px;top:1244px;" width="16" height="26" viewBox="0 0 16 26"><path d="M4 4.5 L11.5 12.5 L4 20.5" fill="none" stroke="#222" stroke-width="3"/></svg>
<svg class="a" style="left:1491px;top:1244px;" width="26" height="26" viewBox="0 0 26 26"><path d="M4.5 4.5 L12.5 12.5 L4.5 20.5" fill="none" stroke="#222" stroke-width="3"/><path d="M20 4 V21" stroke="#222" stroke-width="3"/></svg>
<div class="t" style="left:1600px;top:1243.96px;font-family:'Liberation Sans', sans-serif;font-size:21px;font-weight:400;color:#252423;word-spacing:4.3px">1 to 15 of 32</div>
<div class="a" style="left:1762px;top:0px;width:8px;height:1282px;background:linear-gradient(to right,rgba(0,0,0,0),rgba(0,0,0,0.09))"></div>
<div class="a" style="left:1770px;top:0px;width:534px;height:94px;background:#fff"></div>
<div class="a" style="left:1770px;top:94px;width:534px;height:1070px;background:#f3f3f3"></div>
<div class="a" style="left:1770px;top:1164px;width:534px;height:118px;background:#fff"></div>
<svg class="a" style="left:2190px;top:-2px;" width="100" height="8" viewBox="0 0 100 8"><path d="M8 6.5 L12 2.5 L15 4.5 L17 0" fill="none" stroke="#777" stroke-width="1.2"/><path d="M43 1.5 H48" stroke="#777" stroke-width="1.2"/><path d="M71 0 V4.5 Q71 6.5 73 6.5 H81 Q83 6.5 83 4.5 V0 M77 0 V6.5" fill="none" stroke="#777" stroke-width="1.2"/></svg>
<svg class="a" style="left:1800px;top:40px;" width="20" height="28" viewBox="0 0 20 28"><path d="M15 4 L5 14 L15 24" fill="none" stroke="#333" stroke-width="1.6"/></svg>
<div class="t" style="left:1854px;top:36.69px;font-family:'Liberation Sans', sans-serif;font-size:34.3px;font-weight:400;color:#3d3d3d;">Blend Measure</div>
<svg class="a" style="left:2260px;top:43px;" width="30" height="30" viewBox="0 0 30 30"><path d="M4.5 4.5 L24.5 24.5 M24.5 4.5 L4.5 24.5" stroke="#333" stroke-width="2.2"/></svg>
<div class="a" style="left:1781px;top:116px;width:508px;height:382px;border:3px solid #c91f23;border-radius:5px;box-sizing:border-box;box-shadow:inset 1px 2px 4px rgba(0,0,0,0.12)"></div>
<div class="t" style="left:1799.5px;top:129.36px;font-family:'Liberation Sans', sans-serif;font-size:21px;font-weight:400;color:#323130;-webkit-text-stroke:0.45px #323130;letter-spacing:0.7px">Title</div>
<div class="t" style="left:1848px;top:130.2px;font-family:'Liberation Sans', sans-serif;font-size:20px;font-weight:700;color:#a4262c;">*</div>
<div class="a" style="left:1799px;top:160px;width:476px;height:57px;background:#fff;border:1px solid #e1e1e1;box-sizing:border-box"></div>
<div class="t" style="left:1823px;top:178.66px;font-family:'Liberation Sans', sans-serif;font-size:21px;font-weight:400;color:#323130;">Sales | Margin %</div>
<div class="t" style="left:1799.5px;top:252.36px;font-family:'Liberation Sans', sans-serif;font-size:21px;font-weight:400;color:#323130;-webkit-text-stroke:0.45px #323130;letter-spacing:0.24px">Measure 1</div>
<div class="a" style="left:1799px;top:290px;width:476px;height:58px;background:#fff;border:1px solid #e1e1e1;border-radius:2px;box-sizing:border-box"></div>
<div class="t" style="left:1816px;top:310.36px;font-family:'Liberation Sans', sans-serif;font-size:21px;font-weight:400;color:#323130;">Sales</div>
<svg class="a" style="left:2243px;top:313px;" width="20" height="14" viewBox="0 0 20 14"><path d="M3 3 L10 10 L17 3" fill="none" stroke="#333" stroke-width="1.6"/></svg>
<div class="t" style="left:1799.5px;top:383.36px;font-family:'Liberation Sans', sans-serif;font-size:21px;font-weight:400;color:#323130;-webkit-text-stroke:0.45px #323130;letter-spacing:0.24px">Measure 2</div>
<div class="a" style="left:1799px;top:421px;width:476px;height:58px;background:#fff;border:1px solid #e1e1e1;border-radius:2px;box-sizing:border-box"></div>
<div class="t" style="left:1816px;top:439.86px;font-family:'Liberation Sans', sans-serif;font-size:21px;font-weight:400;color:#323130;">Margin %</div>
<svg class="a" style="left:2243px;top:443px;" width="20" height="14" viewBox="0 0 20 14"><path d="M3 3 L10 10 L17 3" fill="none" stroke="#333" stroke-width="1.6"/></svg>
<div class="t" style="left:1799.5px;top:515.36px;font-family:'Liberation Sans', sans-serif;font-size:21px;font-weight:400;color:#323130;-webkit-text-stroke:0.45px #323130;letter-spacing:0.66px">Blend Direction</div>
<div class="a" style="left:1799px;top:552px;width:476px;height:57px;background:#fff;border:1px solid #e1e1e1;border-radius:2px;box-sizing:border-box"></div>
<div class="t" style="left:1816px;top:570.94px;font-family:'Liberation Sans', sans-serif;font-size:21.5px;font-weight:400;color:#323130;">Vertical</div>
<svg class="a" style="left:2243px;top:574px;" width="20" height="14" viewBox="0 0 20 14"><path d="M3 3 L10 10 L17 3" fill="none" stroke="#333" stroke-width="1.6"/></svg>
<div class="t" style="left:1799.5px;top:659.86px;font-family:'Liberation Sans', sans-serif;font-size:21px;font-weight:400;color:#323130;-webkit-text-stroke:0.45px #323130;letter-spacing:0.47px">Padding</div>
<div class="a" style="left:2038px;top:643px;width:237px;height:57px;background:#fff;border:1px solid #e1e1e1;box-sizing:border-box"></div>
<div class="t" style="left:2206px;top:661.36px;font-family:'Liberation Sans', sans-serif;font-size:21px;font-weight:400;color:#323130;">0</div>
<div class="t" style="left:2235px;top:661.36px;font-family:'Liberation Sans', sans-serif;font-size:21px;font-weight:400;color:#323130;">%</div>
<div class="t" style="left:1799.5px;top:734.86px;font-family:'Liberation Sans', sans-serif;font-size:21px;font-weight:400;color:#323130;-webkit-text-stroke:0.45px #323130;letter-spacing:0.66px">Description</div>
<div class="a" style="left:1799px;top:773px;width:476px;height:90px;background:#fff;border:1px solid #e1e1e1;box-sizing:border-box"></div>
<div class="t" style="left:1810.5px;top:787.04px;font-family:'Liberation Sans', sans-serif;font-size:23.4px;font-weight:400;color:#a19f9d;">Briefly describe the formula</div>
<svg class="a" style="left:2253.5px;top:841px;" width="18" height="20" viewBox="0 0 18 20"><path d="M3 17 L14 6 M9 17 L14 12" stroke="#444" stroke-width="1.6"/></svg>
<div class="a" style="left:1973px;top:1189px;width:145.5px;height:65px;background:#f3f3f3"></div>
<div class="t" style="left:1645.5px;width:800px;text-align:center;top:1213.02px;font-family:'Liberation Sans', sans-serif;font-size:22px;font-weight:400;color:#252423;-webkit-text-stroke:0.45px #252423;letter-spacing:0.36px">Close</div>
<div class="a" style="left:2126px;top:1158px;width:163px;height:105.5px;border:2px solid #e0383c;box-sizing:border-box"></div>
<div class="a" style="left:2132.7px;top:1189px;width:145.5px;height:65px;background:#0078d4"></div>
<div class="t" style="left:1806px;width:800px;text-align:center;top:1212.22px;font-family:'Liberation Sans', sans-serif;font-size:22px;font-weight:400;color:#fff;-webkit-text-stroke:0.45px #fff;letter-spacing:0.63px">Create</div>
</body></html>
